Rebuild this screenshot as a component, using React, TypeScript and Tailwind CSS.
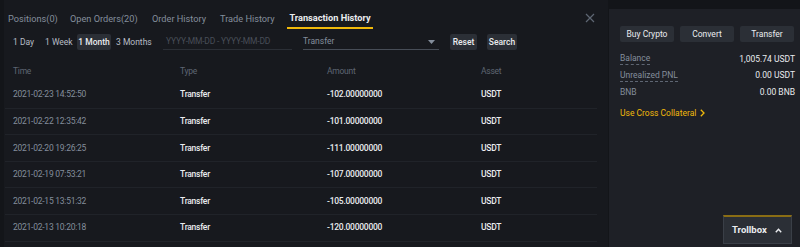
import React from "react";

const rows = [
  ["2021-02-23 14:52:50", "-102.00000000"],
  ["2021-02-22 12:35:42", "-101.00000000"],
  ["2021-02-20 19:26:25", "-111.00000000"],
  ["2021-02-19 07:53:21", "-107.00000000"],
  ["2021-02-15 13:51:32", "-105.00000000"],
  ["2021-02-13 10:20:18", "-120.00000000"],
];

export default function App() {
  return (
    <div
      className="w-[800px] h-[247px] bg-[#131519] flex overflow-hidden relative"
      style={{ fontFamily: "Roboto, 'Liberation Sans', sans-serif" }}
    >
      {/* left panel */}
      <div className="w-[604px] shrink-0 ml-[4px] bg-[#17191e] flex flex-col">
        {/* tabs */}
        <div className="h-[30px] flex items-end pl-[4px] pt-[9px] relative text-[9.2px]">
          <div className="flex items-center h-[21px]">
            <span className="w-[62px] text-[#848e9c] relative top-[-1px]">Positions(0)</span>
            <span className="w-[82px] text-[#848e9c] relative top-[-1px]">Open Orders(20)</span>
            <span className="w-[68px] text-[#848e9c] relative top-[-1px]">Order History</span>
            <span className="w-[67px] text-[#848e9c] relative top-[-1px]">Trade History</span>
            <span className="text-[#eaecef] font-bold relative top-[-1px] h-full flex items-center justify-center border-b-2 border-[#f0b90b] w-[86px]">
              Transaction History
            </span>
          </div>
          <svg className="absolute left-[581px] top-[13px]" width="10" height="10" viewBox="0 0 10 10">
            <path d="M1 1 L9 9 M9 1 L1 9" stroke="#5e6673" strokeWidth="1.2" />
          </svg>
        </div>
        {/* filter */}
        <div className="h-[24px] flex items-center pl-[9px] text-[8.5px]">
          <span className="text-[#b7bdc6] w-[32px]">1 Day</span>
          <span className="text-[#b7bdc6] w-[32px]">1 Week</span>
          <span className="text-[#eaecef] bg-[#2b2f36] w-[34px] h-[16px] flex items-center justify-center rounded-[2px] font-medium">1 Month</span>
          <span className="text-[#b7bdc6] ml-[5px] w-[47px]">3 Months</span>
          <div className="w-[129px] h-[16px] border-b border-[#2b2f36] flex items-center pl-[3px] text-[#474d57] whitespace-nowrap tracking-[-0.2px]">
            YYYY-MM-DD - YYYY-MM-DD
          </div>
          <div className="ml-[11px] w-[136px] h-[16px] border-b border-[#474d57] flex items-center justify-between text-[#848e9c]">
            <span>Transfer</span>
            <svg width="7" height="4" viewBox="0 0 7 4" className="mr-[4px]">
              <path d="M0 0 L7 0 L3.5 4 Z" fill="#848e9c" />
            </svg>
          </div>
          <span className="ml-[11px] w-[27px] bg-[#2b2f36] text-[#eaecef] font-medium h-[16px] flex items-center justify-center rounded-[2px]">Reset</span>
          <span className="ml-[10px] w-[30px] bg-[#2b2f36] text-[#eaecef] font-medium h-[16px] flex items-center justify-center rounded-[2px]">Search</span>
        </div>
        {/* table */}
        <div className="mt-[6px] w-[592px] ml-[1px] text-[8.5px] tracking-[-0.25px]">
          <div className="h-[22px] flex items-center text-[#5e6673] pl-[8px]">
            <span className="w-[167px]">Time</span>
            <span className="w-[147px]">Type</span>
            <span className="w-[154px]">Amount</span>
            <span>Asset</span>
          </div>
          {rows.map(([t, a], i) => (
            <div key={i} className="h-[26.6px] flex items-center border-b border-[#202329] pl-[8px]">
              <span className="w-[167px] text-[#848e9c]">{t}</span>
              <span className="w-[147px] text-[#eaecef] font-medium">Transfer</span>
              <span className="w-[154px] text-[#eaecef] font-medium">{a}</span>
              <span className="text-[#eaecef] font-medium">USDT</span>
            </div>
          ))}
        </div>
      </div>
      {/* right panel */}
      <div className="flex-1 min-w-0 ml-[1px] mt-[9px] bg-[#1e2026] flex flex-col pl-[11px] pr-[5px] pt-[17px] text-[8.5px]">
        <div className="flex gap-[6px]">
          {["Buy Crypto", "Convert", "Transfer"].map((b) => (
            <div key={b} className="w-[54px] h-[16px] bg-[#2b2f36] text-[#eaecef] flex items-center justify-center rounded-[2px]">
              {b}
            </div>
          ))}
        </div>
        <div className="mt-[9px] flex justify-between h-[16px] items-center">
          <span className="text-[#848e9c] border-b border-dashed border-[#5e6673] leading-[11px]">Balance</span>
          <span className="text-[#eaecef]">1,005.74 USDT</span>
        </div>
        <div className="flex justify-between h-[17px] items-center">
          <span className="text-[#848e9c] border-b border-dashed border-[#5e6673] leading-[11px]">Unrealized PNL</span>
          <span className="text-[#eaecef]">0.00 USDT</span>
        </div>
        <div className="flex justify-between h-[16px] items-center">
          <span className="text-[#848e9c]">BNB</span>
          <span className="text-[#eaecef]">0.00 BNB</span>
        </div>
        <div className="mt-[7px] flex items-center gap-[4px] text-[#f0b90b]">
          <span>Use Cross Collateral</span>
          <svg width="5" height="8" viewBox="0 0 5 8">
            <path d="M0.8 0.8 L4 4 L0.8 7.2" stroke="#f0b90b" strokeWidth="1.3" fill="none" />
          </svg>
        </div>
      </div>
      {/* trollbox */}
      <div className="absolute left-[723px] top-[215px] w-[69px] h-[29px] bg-[#2b2f36] border border-[#3a3f47] border-t-2 border-t-[#8a6d14] flex items-center pl-[8px] gap-[8px]">
        <span className="text-[#eaecef] font-bold text-[9.5px]">Trollbox</span>
        <svg width="7" height="5" viewBox="0 0 7 5">
          <path d="M0.8 4.2 L3.5 1.2 L6.2 4.2" stroke="#eaecef" strokeWidth="1.4" fill="none" />
        </svg>
      </div>
    </div>
  );
}
